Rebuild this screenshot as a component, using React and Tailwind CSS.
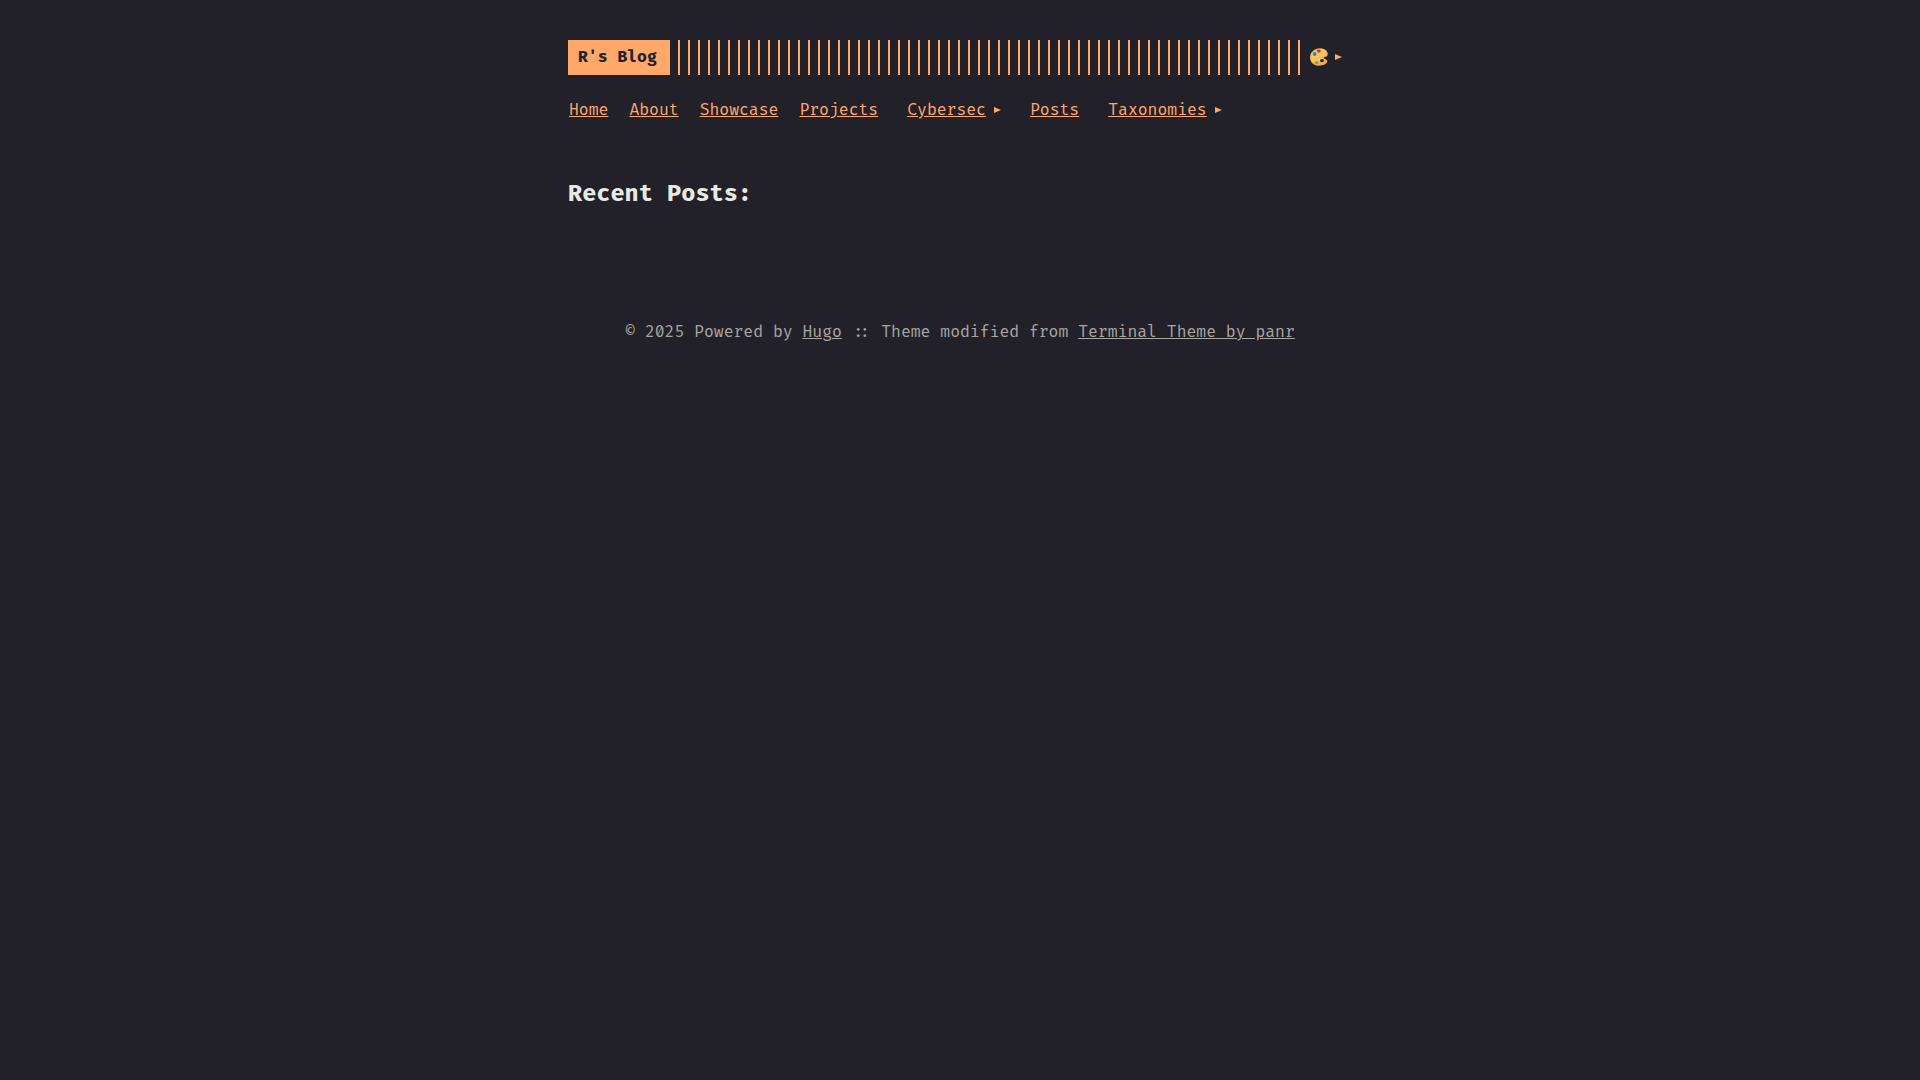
import React from "react";

const menu = [
  { label: "Home" },
  { label: "About" },
  { label: "Showcase" },
  { label: "Projects" },
  { label: "Cybersec", sub: true, spaced: true },
  { label: "Posts", spaced: true },
  { label: "Taxonomies", sub: true, spaced: true },
];

const Arrow = () => (
  <svg width="7" height="6" viewBox="0 0 7 6" fill="currentColor" aria-hidden="true">
    <path d="M0 0 L7 3 L0 6 Z" />
  </svg>
);

const Palette = () => (
  <svg width="18" height="18" viewBox="0 0 18 18" aria-hidden="true">
    <path
      d="M10 0.300C4.600 0.300 0 4.300 0 9.600C0 14.400 3.700 17.700 8.400 17.700C12.900 17.700 17.300 16 17.300 13.300C17.300 11.700 16 11.200 14.900 10.900C13.900 10.600 13.500 9.900 14.100 9.200C14.800 8.500 15.800 9 16.700 8.400C19 6.800 17.800 0.300 10 0.300Z"
      fill="#f2b04e"
    />
    <path d="M10 1C4.800 1 0.800 4.600 0.800 9.200C0.800 12.800 3.400 15.400 7.400 15.800C10 14.800 10.500 11.500 12.500 9C14.500 8 16.800 8 16.800 5.600C16.600 3 14 1 10 1Z" fill="#f8c068" />
    <ellipse cx="8.800" cy="2.900" rx="2" ry="1.500" fill="#d62f2b" />
    <circle cx="4.600" cy="6" r="1.900" fill="#2684e0" />
    <ellipse cx="3.300" cy="10.400" rx="1.800" ry="1.500" fill="#fbd912" />
    <ellipse cx="6.700" cy="14.500" rx="1.900" ry="1.500" fill="#7aaa38" />
    <ellipse cx="12" cy="12.600" rx="2" ry="1.600" fill="#292129" />
  </svg>
);

const Header = () => (
  <header>
    <div className="flex">
      <a href="#" className="min-w-[102px] shrink-0 bg-[#ffa86a] px-[10px] pt-1 pb-[5px] font-bold text-[#222129]">
        R's Blog
      </a>
      <div className="mx-2 flex-1 bg-[repeating-linear-gradient(90deg,#ffa86a,#ffa86a_2px,transparent_2px,transparent_10px)]" />
      <button type="button" aria-label="Theme" className="mr-[10px] flex items-center gap-[7px] pb-px">
        <Palette />
        <Arrow />
      </button>
    </div>

    <nav className="mt-[22px]">
      <ul className="flex flex-wrap gap-x-[21px] pl-px">
        {menu.map((item) => (
          <li key={item.label} className={item.spaced ? "ml-2 flex items-center gap-2" : "flex items-center"}>
            <a href="#" className="underline">
              {item.label}
            </a>
            {item.sub && <Arrow />}
          </li>
        ))}
      </ul>
    </nav>
  </header>
);

const Footer = () => (
  <footer className="mt-[109px] text-center text-[#a6a6a3]">
    © 2025 Powered by{" "}
    <a href="#" className="underline">
      Hugo
    </a>{" "}
    :: Theme modified from{" "}
    <a href="#" className="underline">
      Terminal Theme by panr
    </a>
  </footer>
);

const App = () => (
  <div className="min-h-screen bg-[#222129] font-['Fira_Code','Liberation_Mono',monospace] text-base leading-[26px] text-[#ffa86a]">
    <div className="mx-auto max-w-[864px] p-10">
      <Header />
      <main className="mt-[55px]">
        <h1 className="text-[23px] font-bold leading-[32px] text-[#e9e9e4]">Recent Posts:</h1>
      </main>
      <Footer />
    </div>
  </div>
);

export default App;
